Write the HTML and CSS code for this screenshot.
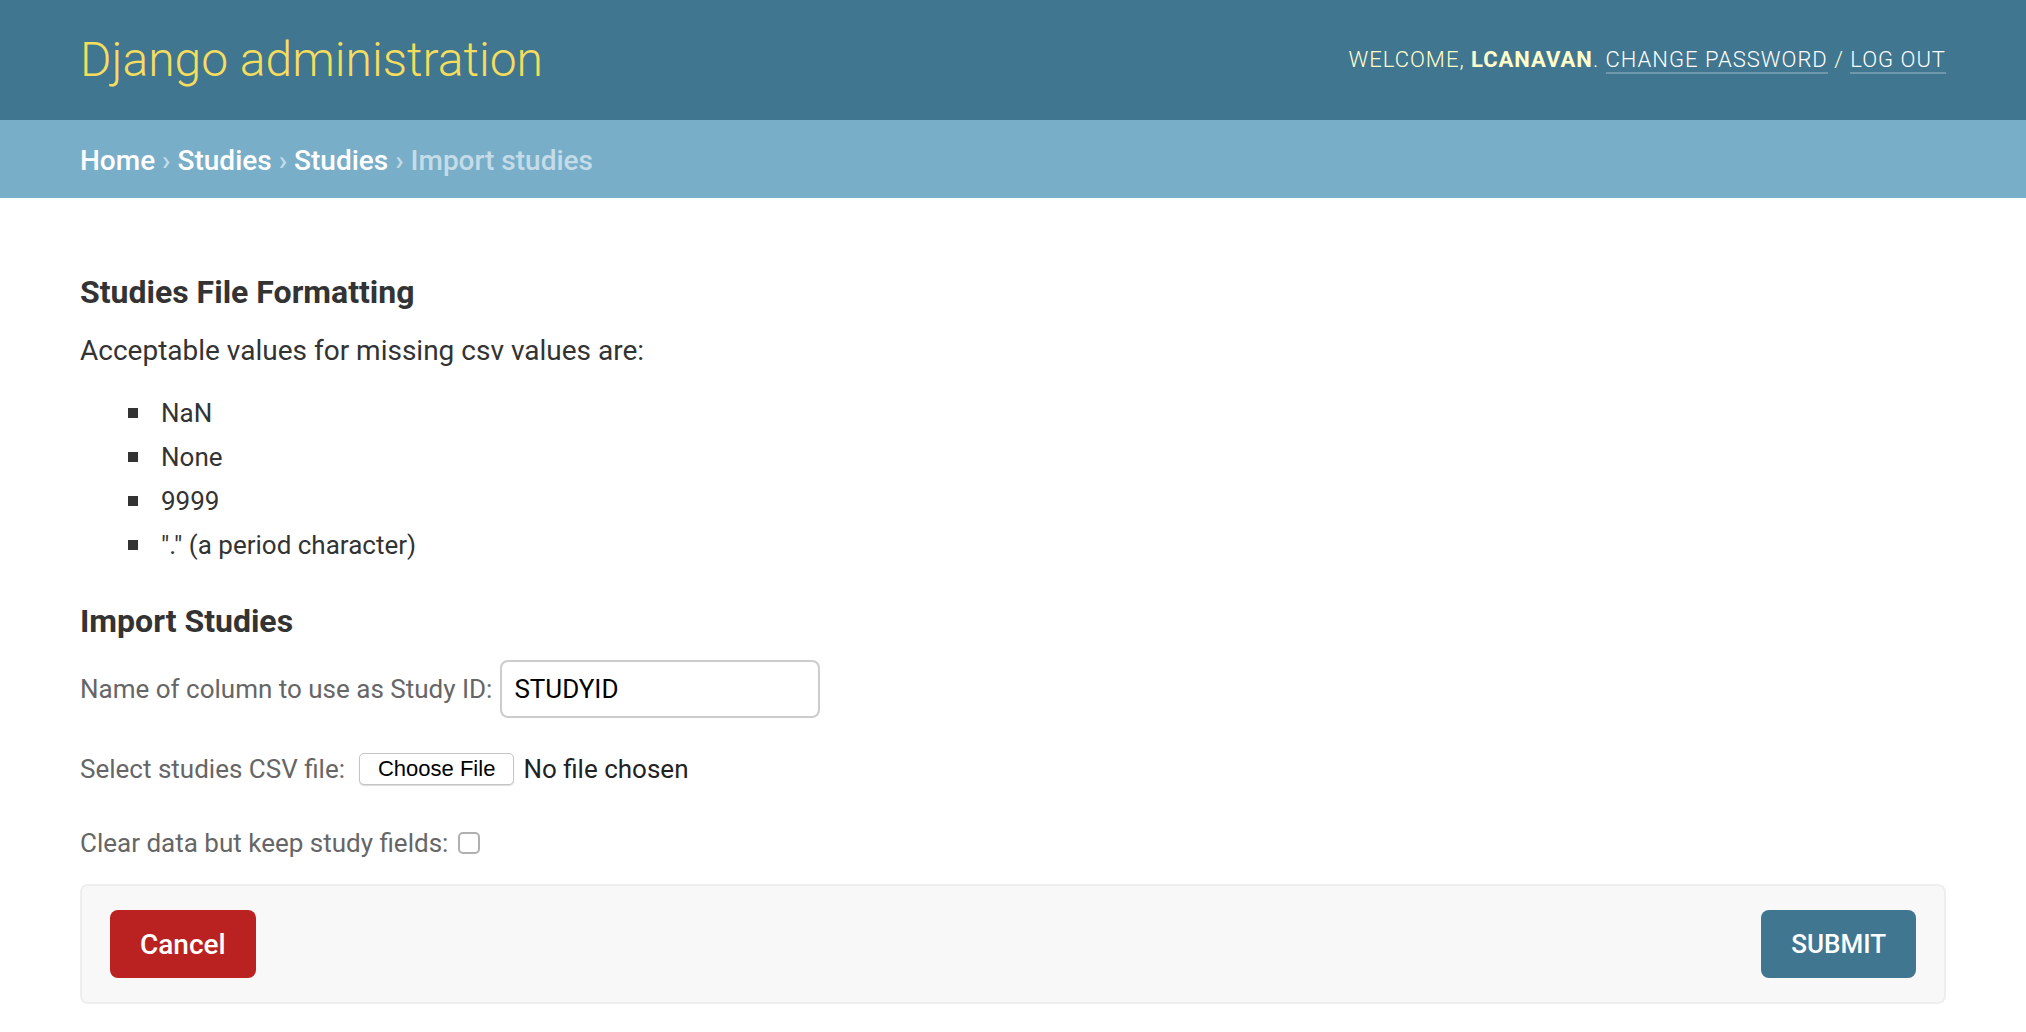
FILE: index.html
```html
<!DOCTYPE html>
<html lang="en">
<head>
<meta charset="utf-8">
<title>Import studies | Django site admin</title>
<link rel="stylesheet" href="styles.css">
</head>
<body>
<div class="container">
  <header class="header">
    <div class="branding"><h1 class="site-name">Django administration</h1></div>
    <div class="user-tools">Welcome, <strong>lcanavan</strong>. <a href="#">Change password</a> / <a href="#">Log out</a></div>
  </header>
  <nav class="breadcrumbs"><a href="#">Home</a> › <a href="#">Studies</a> › <a href="#">Studies</a> › Import studies</nav>
  <main class="content">
    <h2 class="section-title first-title">Studies File Formatting</h2>
    <p class="intro">Acceptable values for missing csv values are:</p>
    <ul class="values">
      <li>NaN</li>
      <li>None</li>
      <li>9999</li>
      <li>&quot;.&quot; (a period character)</li>
    </ul>
    <h2 class="section-title import-title">Import Studies</h2>
    <form class="import-form">
      <div class="form-row row-text">
        <label class="field-label" for="studyid">Name of column to use as Study ID:</label>
        <input class="text-input" id="studyid" type="text" value="STUDYID">
      </div>
      <div class="form-row row-file">
        <label class="field-label">Select studies CSV file:</label>
        <button type="button" class="file-btn">Choose File</button>
        <span class="file-name">No file chosen</span>
      </div>
      <div class="form-row row-check">
        <label class="field-label" for="clear">Clear data but keep study fields:</label>
        <input class="check" id="clear" type="checkbox">
      </div>
      <div class="submit-row">
        <a href="#" class="cancel-link">Cancel</a>
        <button type="submit" class="submit-btn">Submit</button>
      </div>
    </form>
  </main>
</div>
</body>
</html>
```
FILE: styles.css
```css
* { box-sizing: border-box; }
html, body { margin: 0; padding: 0; }
body {
  font-family: Roboto, "Noto Sans", "DejaVu Sans", sans-serif;
  font-size: 28px;
  color: #333;
  background: #fff;
}
a { text-decoration: none; }

.header {
  display: flex;
  justify-content: space-between;
  align-items: center;
  height: 120px;
  padding: 20px 80px;
  background: #417690;
  color: #ffc;
}
.site-name {
  margin: 0;
  font-size: 48px;
  font-weight: 300;
  line-height: 80px;
  color: #f5dd5d;
}
.user-tools {
  font-size: 22px;
  font-weight: 300;
  letter-spacing: 1px;
  text-transform: uppercase;
  line-height: 80px;
}
.user-tools strong { font-weight: 700; }
.user-tools a {
  color: #fff;
  border-bottom: 2px solid rgba(255, 255, 255, 0.25);
}

.breadcrumbs {
  background: #79aec8;
  padding: 22px 80px 18px;
  height: 78px;
  font-size: 28px;
  font-weight: 500;
  line-height: 38px;
  color: #c4dce8;
}
.breadcrumbs a { color: #fff; }

.content {
  padding: 40px 80px;
}
.section-title {
  font-size: 32px;
  font-weight: 700;
  color: #333;
  line-height: 38px;
}
.first-title { margin: 35px 0 20px; }
.import-title { margin: 35px 0 16px; }
.intro {
  margin: 0 0 20px;
  line-height: 40px;
}
.values {
  margin: 0;
  padding-left: 48px;
  list-style: none;
}
.values li {
  display: flex;
  align-items: center;
  font-size: 26px;
  line-height: 40px;
  padding: 2px 0;
}
.values li::before {
  content: "";
  flex: none;
  width: 10px;
  height: 10px;
  margin-right: 23px;
  background: #333;
}

.import-form { display: flex; flex-direction: column; }
.form-row {
  display: flex;
  align-items: center;
}
.field-label {
  font-size: 26px;
  color: #666;
}
.row-text { margin-top: 4px; }
.text-input {
  margin-left: 8px;
  width: 320px;
  height: 58px;
  padding: 10px 12px;
  border: 2px solid #ccc;
  border-radius: 8px;
  font-family: Roboto, "Noto Sans", sans-serif;
  font-size: 26px;
  color: #000;
  outline: none;
}
.row-file { margin-top: 35px; height: 32px; }
.file-btn {
  margin-left: 14px;
  height: 32px;
  padding: 0 18px;
  background: #fff;
  border: 1px solid #c4c4c4;
  border-radius: 5px;
  box-shadow: 0 1px 1px rgba(0, 0, 0, 0.15);
  font-family: "Liberation Sans", Arial, sans-serif;
  font-size: 22px;
  line-height: 30px;
  color: #000;
}
.file-name {
  margin-left: 9px;
  font-size: 26px;
  color: #222;
}
.row-check { margin-top: 43px; height: 30px; }
.check {
  appearance: none;
  -webkit-appearance: none;
  margin: 0 0 0 10px;
  width: 22px;
  height: 22px;
  border: 2px solid #b0b0b0;
  border-radius: 5px;
  background: #fff;
}

.submit-row {
  display: flex;
  justify-content: space-between;
  align-items: center;
  margin-top: 26px;
  height: 120px;
  padding: 24px 28px;
  background: #f8f8f8;
  border: 2px solid #eee;
  border-radius: 8px;
}
.cancel-link {
  display: flex;
  align-items: center;
  height: 68px;
  padding: 0 30px;
  background: #ba2121;
  border-radius: 8px;
  color: #fff;
  font-size: 28px;
  font-weight: 500;
}
.submit-btn {
  height: 68px;
  padding: 0 30px;
  background: #417690;
  border: none;
  border-radius: 8px;
  color: #fff;
  font-family: Roboto, "Noto Sans", sans-serif;
  font-size: 26px;
  font-weight: 500;
  text-transform: uppercase;
}
```
